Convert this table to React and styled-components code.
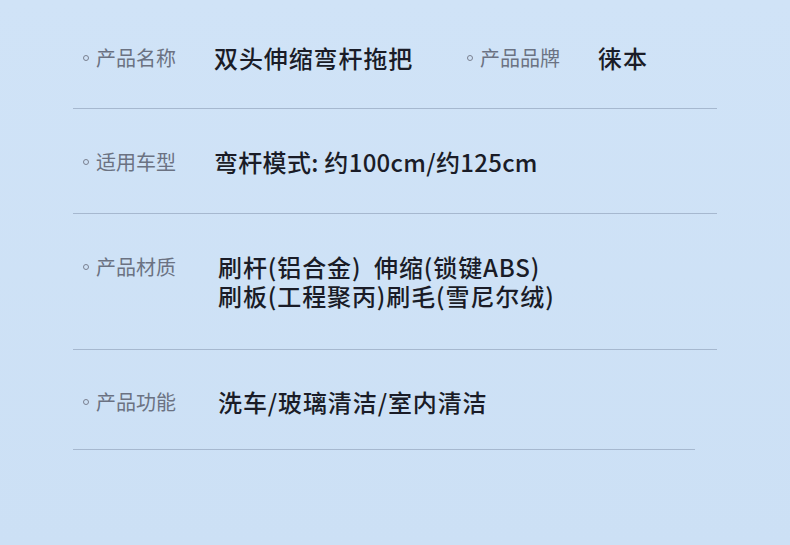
import styled, { createGlobalStyle } from 'styled-components';

const GlobalStyle = createGlobalStyle`
  html, body {
    margin: 0;
    padding: 0;
  }
  body {
    background: #cde1f6;
    font-family: "Noto Sans CJK SC", "Noto Sans", sans-serif;
  }
`;

const Page = styled.div`
  width: 790px;
  height: 545px;
  overflow: hidden;
  background: linear-gradient(180deg, #d0e3f7 0%, #cce0f5 100%);
`;

const Table = styled.div`
  width: 644px;
  margin-left: 73px;
`;

const Row = styled.div`
  display: flex;
  align-items: flex-start;
  padding: ${(p) => p.$pt}px 0 ${(p) => p.$pb}px;
  width: ${(p) => p.$width || 644}px;
  border-bottom: 1px solid #a6b8cf;
`;

const Pair = styled.div`
  display: flex;
  align-items: flex-start;
  width: ${(p) => (p.$width ? `${p.$width}px` : 'auto')};
  flex-shrink: 0;
`;

const Label = styled.div`
  display: flex;
  align-items: center;
  width: 131px;
  padding-left: 10px;
  flex-shrink: 0;
  font-size: 20px;
  line-height: 29px;
  color: #6b7282;

  &::before {
    content: '';
    width: 4px;
    height: 4px;
    border: 1px solid #7a8090;
    border-radius: 50%;
    margin-right: 7px;
  }
`;

const Value = styled.div`
  padding-left: ${(p) => p.$indent || 0}px;
  font-size: 24px;
  font-weight: 500;
  line-height: 29px;
  color: #1a1c27;
  letter-spacing: ${(p) => (p.$tight ? 0.3 : 0.9)}px;
  white-space: pre;
`;

export default function App() {
  return (
    <Page>
      <GlobalStyle />
      <Table>
        <Row $pt={43} $pb={36}>
          <Pair $width={384}>
            <Label>产品名称</Label>
            <Value>双头伸缩弯杆拖把</Value>
          </Pair>
          <Pair>
            <Label>产品品牌</Label>
            <Value>徕本</Value>
          </Pair>
        </Row>
        <Row $pt={38} $pb={37}>
          <Pair>
            <Label>适用车型</Label>
            <Value $tight>弯杆模式: 约100cm/约125cm</Value>
          </Pair>
        </Row>
        <Row $pt={38} $pb={39}>
          <Pair>
            <Label>产品材质</Label>
            <Value $indent={4}>
              {'刷杆(铝合金)  伸缩(锁键ABS)\n刷板(工程聚丙)刷毛(雪尼尔绒)'}
            </Value>
          </Pair>
        </Row>
        <Row $pt={37} $pb={33} $width={622}>
          <Pair>
            <Label>产品功能</Label>
            <Value $indent={4}>洗车/玻璃清洁/室内清洁</Value>
          </Pair>
        </Row>
      </Table>
    </Page>
  );
}
